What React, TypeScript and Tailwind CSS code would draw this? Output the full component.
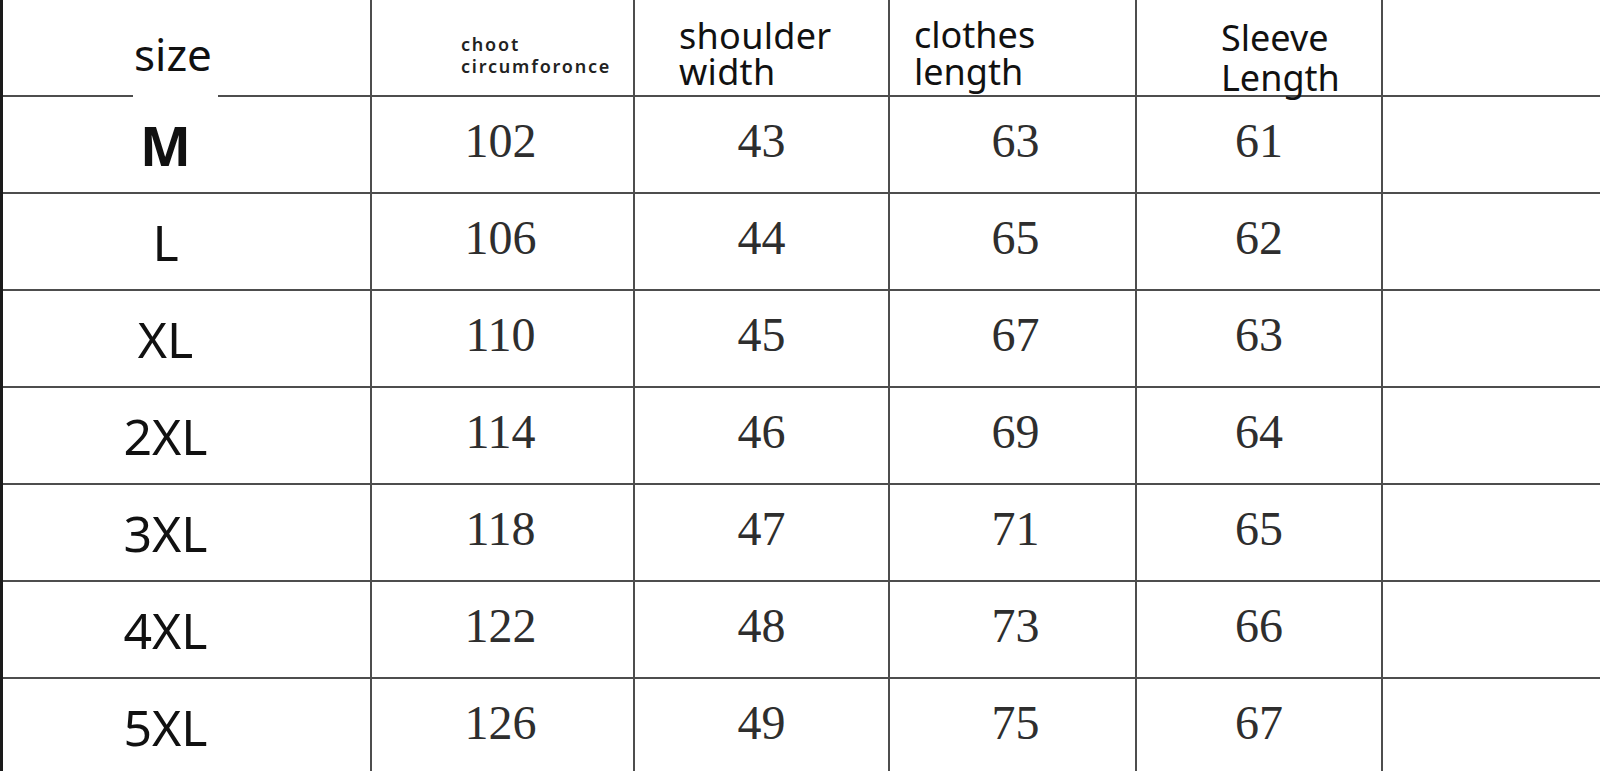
import React from "react";

const rows: [string, number, number, number, number][] = [
  ["M", 102, 43, 63, 61],
  ["L", 106, 44, 65, 62],
  ["XL", 110, 45, 67, 63],
  ["2XL", 114, 46, 69, 64],
  ["3XL", 118, 47, 71, 65],
  ["4XL", 122, 48, 73, 66],
  ["5XL", 126, 49, 75, 67],
];

const sans = { fontFamily: '"Noto Sans", "Open Sans", sans-serif' };
const serif = { fontFamily: '"Liberation Serif", "Times New Roman", serif' };

export default function App() {
  return (
    <div className="w-[1600px] h-[771px] overflow-hidden bg-white flex">
      <div className="w-[3px] h-full bg-[#1a1a1a] shrink-0" />
      <div className="flex-1 flex flex-col">
        {/* header */}
        <div className="flex h-[97px] shrink-0">
          <div className="w-[369px] shrink-0 flex flex-col border-r-2 border-[#4d4d4d]">
            <div className="flex-1 pl-[131px] pt-[32px]">
              <span className="text-[44px] leading-[44px] text-[#111]" style={sans}>size</span>
            </div>
            <div className="flex h-[2px]">
              <div className="w-[130px] bg-[#4d4d4d]" />
              <div className="w-[85px]" />
              <div className="flex-1 bg-[#4d4d4d]" />
            </div>
          </div>
          <div className="w-[263px] shrink-0 border-r-2 border-b-2 border-[#4d4d4d] pl-[89px] pt-[33px]">
            <div className="text-[18px] leading-[22px] font-semibold tracking-[1.8px] text-[#222]" style={sans}>
              <div>choot</div>
              <div>circumforonce</div>
            </div>
          </div>
          <div className="w-[255px] shrink-0 border-r-2 border-b-2 border-[#4d4d4d] pl-[44px] pt-[18px]">
            <div className="text-[36px] leading-[36px] text-[#111] tracking-[0.3px]" style={sans}>
              <div>shoulder</div>
              <div>width</div>
            </div>
          </div>
          <div className="w-[247px] shrink-0 border-r-2 border-b-2 border-[#4d4d4d] pl-[24px] pt-[16px]">
            <div className="text-[36px] leading-[37px] text-[#111]" style={sans}>
              <div>clothes</div>
              <div>length</div>
            </div>
          </div>
          <div className="w-[246px] shrink-0 border-r-2 border-b-2 border-[#4d4d4d] pl-[84px] pt-[18px]">
            <div className="text-[36px] leading-[40px] text-[#111]" style={sans}>
              <div>Sleeve</div>
              <div>Length</div>
            </div>
          </div>
          <div className="flex-1 border-b-2 border-[#4d4d4d]" />
        </div>
        {rows.map(([s, a, b, c, d]) => (
          <div key={s} className="flex h-[97px] shrink-0 border-b-2 border-[#4d4d4d]">
            <div className="w-[369px] shrink-0 border-r-2 border-[#4d4d4d] flex items-center justify-center pr-[42px]">
              <span
                className={
                  s === "M"
                    ? "text-[54px] leading-none font-bold text-[#111]"
                    : "text-[50px] leading-none text-[#111]"
                }
                style={sans}
              >
                {s}
              </span>
            </div>
            {[a, b, c, d].map((v, i) => (
              <div
                key={i}
                className={
                  i === 0
                    ? "w-[263px] shrink-0 border-r-2 border-[#4d4d4d] flex items-center justify-center pb-[8px] pr-[4px]"
                    : i === 1
                    ? "w-[255px] shrink-0 border-r-2 border-[#4d4d4d] flex items-center justify-center pb-[8px]"
                    : i === 2
                    ? "w-[247px] shrink-0 border-r-2 border-[#4d4d4d] flex items-center justify-center pb-[8px] pl-[6px]"
                    : "w-[246px] shrink-0 border-r-2 border-[#4d4d4d] flex items-center justify-center pb-[8px]"
                }
              >
                <span className="text-[48px] leading-none text-[#2e2e2e]" style={serif}>
                  {v}
                </span>
              </div>
            ))}
            <div className="flex-1" />
          </div>
        ))}
      </div>
    </div>
  );
}
